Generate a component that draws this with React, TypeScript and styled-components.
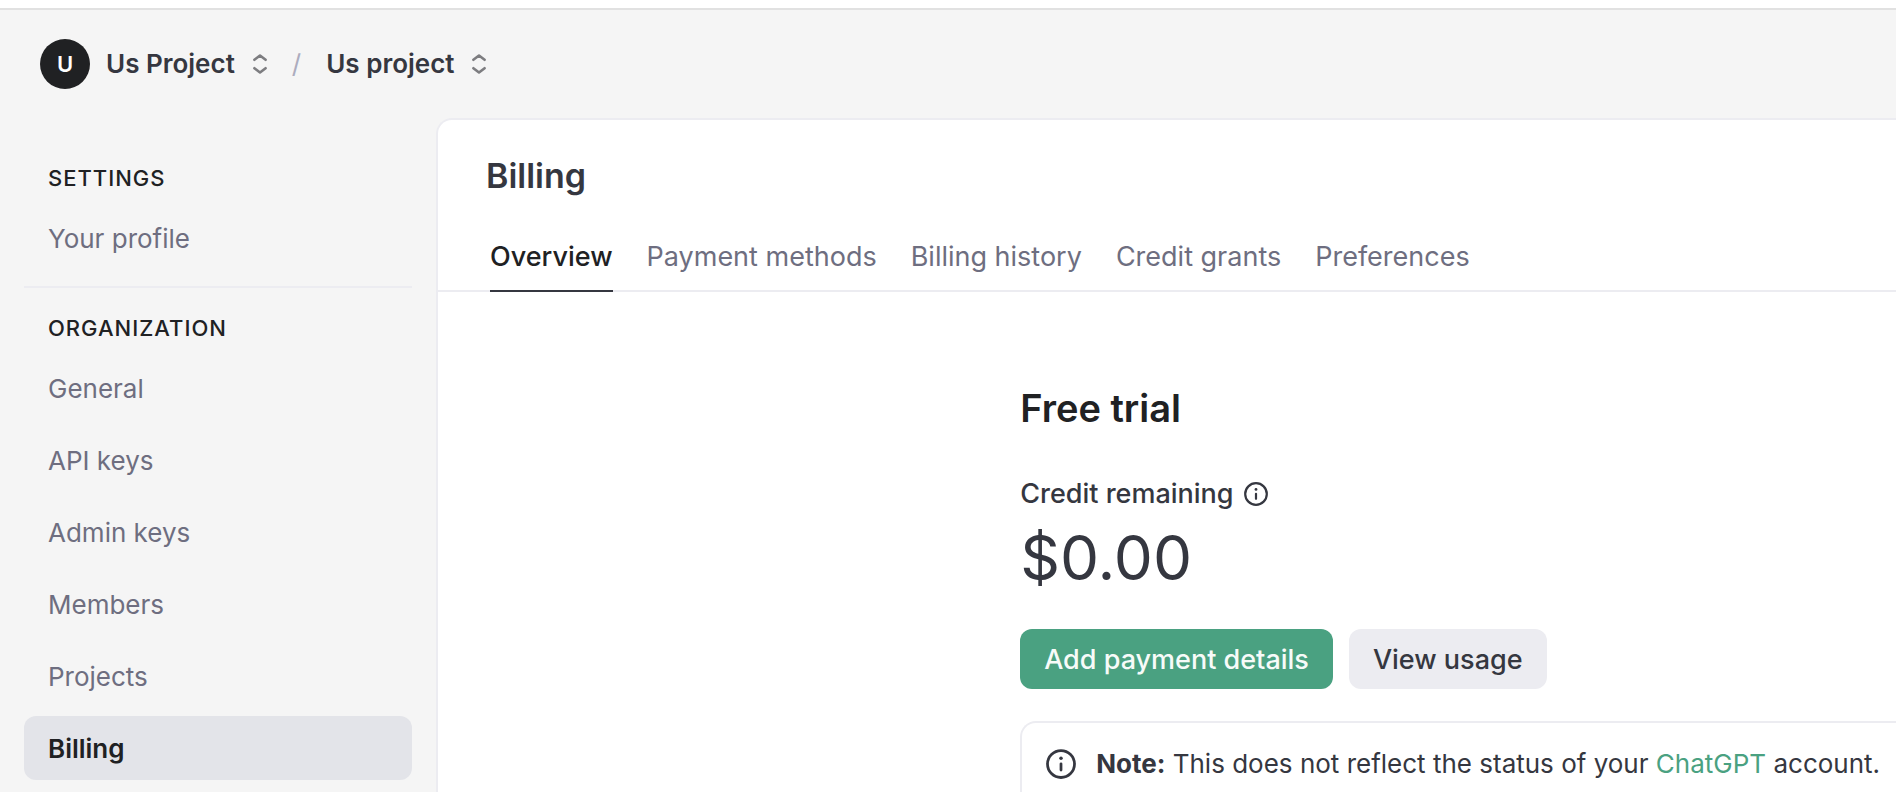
import React from 'react';
import styled, { createGlobalStyle } from 'styled-components';

const color = {
  canvas: '#f5f5f5',
  panel: '#ffffff',
  line: '#ececf1',
  ink: '#202123',
  text: '#353740',
  muted: '#6e6e80',
  faint: '#acacbe',
  green: '#4aa181',
  selected: '#e3e4e9',
};

const GlobalStyle = createGlobalStyle`
  *, *::before, *::after { box-sizing: border-box; }
  body {
    margin: 0;
    background: ${color.canvas};
    color: ${color.text};
    font-family: Inter, "Liberation Sans", sans-serif;
    font-size: 26px;
    line-height: 36px;
  }
  h1, h2, h3, p, ul { margin: 0; padding: 0; }
  ul { list-style: none; }
  a { color: inherit; text-decoration: none; }
  button { font: inherit; color: inherit; border: 0; background: none; padding: 0; cursor: pointer; }
`;

const Shell = styled.div`
  display: flex;
  flex-direction: column;
  height: 100vh;
  overflow: hidden;
  border-top: 8px solid #ffffff;
`;

const Header = styled.header`
  display: flex;
  flex: none;
  align-items: center;
  height: 110px;
  padding: 0 40px;
  border-top: 2px solid #e1e1e1;
`;

const Avatar = styled.span`
  display: flex;
  align-items: center;
  justify-content: center;
  width: 50px;
  height: 50px;
  margin-right: 16px;
  border-radius: 50%;
  background: ${color.ink};
  color: #ffffff;
  font-size: 22px;
  font-weight: 600;
`;

const Switcher = styled.button`
  display: flex;
  align-items: center;
  gap: 18px;
  font-weight: 600;
`;

const Slash = styled.span`
  margin: 0 25px;
  color: ${color.faint};
`;

const Body = styled.div`
  display: flex;
  flex: 1;
  min-height: 0;
`;

const Sidebar = styled.nav`
  flex: none;
  width: 436px;
  padding: 42px 24px 0;
`;

const GroupTitle = styled.h3`
  padding: 0 24px 10px;
  color: ${color.ink};
  font-size: 22px;
  font-weight: 500;
  line-height: 36px;
  letter-spacing: 1px;
  text-transform: uppercase;
`;

const Group = styled.section`
  & + & {
    margin-top: 16px;
    padding-top: 22px;
    border-top: 2px solid ${color.line};
  }
`;

const NavList = styled.ul`
  display: flex;
  flex-direction: column;
  gap: 8px;
`;

const NavLink = styled.a<{ $active?: boolean }>`
  display: flex;
  align-items: center;
  height: 64px;
  padding: 2px 24px 0;
  border-radius: 12px;
  background: ${(p) => (p.$active ? color.selected : 'transparent')};
  color: ${(p) => (p.$active ? color.ink : color.muted)};
  font-weight: ${(p) => (p.$active ? 600 : 400)};
`;

const Panel = styled.main`
  flex: 1;
  min-width: 0;
  overflow: hidden;
  border-top: 2px solid ${color.line};
  border-left: 2px solid ${color.line};
  border-top-left-radius: 16px;
  background: ${color.panel};
`;

const PageTitle = styled.h1`
  padding: 34px 48px 0;
  font-size: 34px;
  font-weight: 600;
  line-height: 44px;
`;

const Tabs = styled.nav`
  display: flex;
  gap: 34px;
  height: 94px;
  padding: 0 52px;
  border-bottom: 2px solid ${color.line};
  font-size: 27px;
`;

const Tab = styled.a<{ $active?: boolean }>`
  padding-top: 41px;
  margin-bottom: -2px;
  border-bottom: 2px solid ${(p) => (p.$active ? color.text : 'transparent')};
  color: ${(p) => (p.$active ? color.ink : color.muted)};
  font-weight: ${(p) => (p.$active ? 500 : 400)};
  white-space: nowrap;
`;

const Content = styled.section`
  padding: 92px 0 0 calc(40% - 1px);
`;

const SectionTitle = styled.h2`
  color: ${color.ink};
  font-size: 38px;
  font-weight: 600;
  line-height: 48px;
`;

const CreditLabel = styled.h3`
  display: flex;
  align-items: center;
  gap: 10px;
  margin-top: 44px;
  font-size: 27px;
  font-weight: 500;
`;

const Amount = styled.p`
  margin-top: 6px;
  font-size: 62px;
  line-height: 80px;
`;

const Actions = styled.div`
  display: flex;
  gap: 16px;
  margin-top: 31px;
`;

const Button = styled.button<{ $primary?: boolean }>`
  height: 60px;
  padding: 2px 24px 0;
  border-radius: 12px;
  background: ${(p) => (p.$primary ? color.green : color.line)};
  color: ${(p) => (p.$primary ? '#f7fbf9' : color.text)};
  font-size: 27px;
  font-weight: 500;
`;

const Note = styled.aside`
  display: flex;
  align-items: center;
  gap: 20px;
  height: 86px;
  margin-top: 32px;
  padding-left: 24px;
  border: 2px solid ${color.line};
  border-right: 0;
  border-radius: 16px 0 0 16px;
  white-space: nowrap;
`;

const Strong = styled.strong`
  font-weight: 700;
`;

const GreenLink = styled.a`
  color: ${color.green};
`;

const ChevronsIcon = () => (
  <svg width="14" height="20" viewBox="0 0 14 20" fill="none" stroke="#7d7d80" strokeWidth="2.6" strokeLinecap="round" strokeLinejoin="round" aria-hidden="true">
    <path d="M1.4 5.8 7 1.5l5.6 4.3" />
    <path d="M1.4 14.2 7 18.5l5.6-4.3" />
  </svg>
);

const InfoIcon = ({ size }: { size: number }) => (
  <svg width={size} height={size} viewBox="0 0 24 24" fill="none" stroke="currentColor" strokeWidth="2.2" strokeLinecap="round" aria-hidden="true">
    <circle cx="12" cy="12" r="10.8" />
    <path d="M12 11.8v5" />
    <circle cx="12" cy="7.4" r="1.4" fill="currentColor" stroke="none" />
  </svg>
);

const organizationLinks = ['General', 'API keys', 'Admin keys', 'Members', 'Projects', 'Billing'];
const tabs = ['Overview', 'Payment methods', 'Billing history', 'Credit grants', 'Preferences'];

export default function App() {
  return (
    <Shell>
      <GlobalStyle />
      <Header>
        <Avatar>U</Avatar>
        <Switcher>
          Us Project
          <ChevronsIcon />
        </Switcher>
        <Slash>/</Slash>
        <Switcher>
          Us project
          <ChevronsIcon />
        </Switcher>
      </Header>
      <Body>
        <Sidebar>
          <Group>
            <GroupTitle>Settings</GroupTitle>
            <NavList>
              <li>
                <NavLink href="#profile">Your profile</NavLink>
              </li>
            </NavList>
          </Group>
          <Group>
            <GroupTitle>Organization</GroupTitle>
            <NavList>
              {organizationLinks.map((label) => (
                <li key={label}>
                  <NavLink href="#organization" $active={label === 'Billing'}>
                    {label}
                  </NavLink>
                </li>
              ))}
            </NavList>
          </Group>
        </Sidebar>
        <Panel>
          <PageTitle>Billing</PageTitle>
          <Tabs>
            {tabs.map((label) => (
              <Tab key={label} href="#billing" $active={label === 'Overview'}>
                {label}
              </Tab>
            ))}
          </Tabs>
          <Content>
            <SectionTitle>Free trial</SectionTitle>
            <CreditLabel>
              Credit remaining
              <InfoIcon size={24} />
            </CreditLabel>
            <Amount>$0.00</Amount>
            <Actions>
              <Button $primary>Add payment details</Button>
              <Button>View usage</Button>
            </Actions>
            <Note>
              <InfoIcon size={30} />
              <p>
                <Strong>Note:</Strong> This does not reflect the status of your{' '}
                <GreenLink href="#chatgpt">ChatGPT</GreenLink> account.
              </p>
            </Note>
          </Content>
        </Panel>
      </Body>
    </Shell>
  );
}
